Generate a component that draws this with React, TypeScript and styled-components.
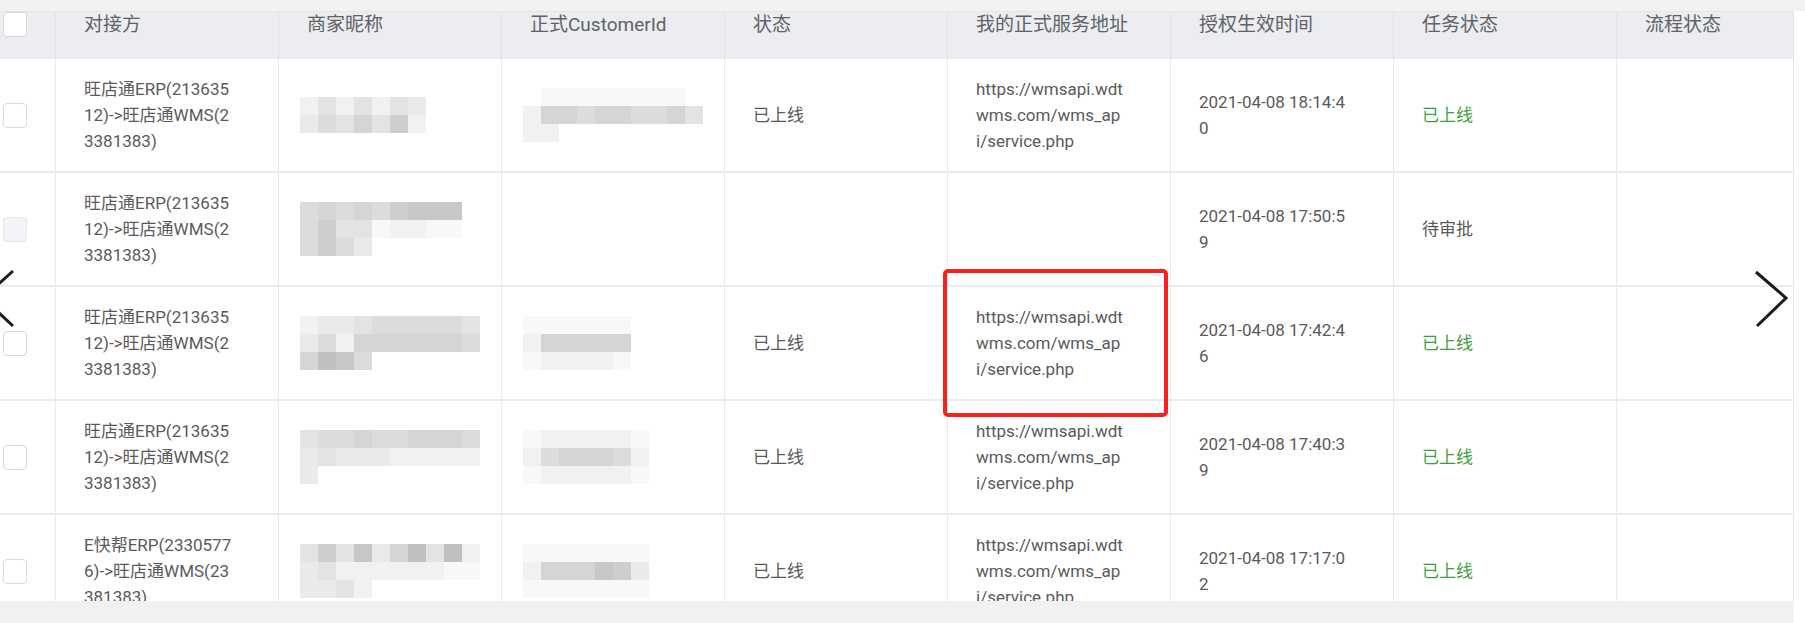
import React from 'react';
import styled, { createGlobalStyle } from 'styled-components';

const GlobalStyle = createGlobalStyle`
    html, body {
        margin: 0;
        padding: 0;
        background: #ffffff;
    }
    body {
        font-family: Roboto, "Noto Sans CJK SC", sans-serif;
    }
`;

const URL_LINES = ['https://wmsapi.wdt', 'wms.com/wms_ap', 'i/service.php'];
const WDT_LINES = ['旺店通ERP(213635', '12)->旺店通WMS(2', '3381383)'];

const headers = ['对接方', '商家昵称', '正式CustomerId', '状态', '我的正式服务地址', '授权生效时间', '任务状态', '流程状态'];

const rows: Array<iRow> = [
    {
        party: WDT_LINES,
        nick: ['24242430', '35464720'],
        customer: ['0111111110', '2665665564', '22'],
        status: '已上线',
        url: URL_LINES,
        time: ['2021-04-08 18:14:4', '0'],
        task: '已上线',
        online: true,
    },
    {
        party: WDT_LINES,
        nick: ['565657888', '574412211', '5753'],
        status: '',
        time: ['2021-04-08 17:50:5', '9'],
        task: '待审批',
        online: false,
        disabled: true,
    },
    {
        party: WDT_LINES,
        nick: ['2334555554', '3526666665', '6985'],
        customer: ['111111', '266666', '122221'],
        status: '已上线',
        url: URL_LINES,
        time: ['2021-04-08 17:42:4', '6'],
        task: '已上线',
        online: true,
    },
    {
        party: WDT_LINES,
        nick: ['4556556665', '3433322222', '3'],
        customer: ['1222221', '2566652', '1222221'],
        status: '已上线',
        url: URL_LINES,
        time: ['2021-04-08 17:40:3', '9'],
        task: '已上线',
        online: true,
    },
    {
        party: ['E快帮ERP(2330577', '6)->旺店通WMS(23', '381383)'],
        nick: ['4748369492', '3422222211', '3342'],
        customer: ['1111111', '2666873', '1111111'],
        status: '已上线',
        url: URL_LINES,
        time: ['2021-04-08 17:17:0', '2'],
        task: '已上线',
        online: true,
    },
];

const Lines = ({ lines }: { lines?: string[] }) => {
    if (!lines) {
        return null;
    }
    return <TextBlock>
        {lines.map((line, i) => <Line key={i}>{line}</Line>)}
    </TextBlock>;
};

const Mosaic = ({ rows }: { rows?: string[] }) => {
    if (!rows) {
        return null;
    }
    return <MosaicGrid>
        {rows.map((r, i) => (
            <MosaicRow key={i}>
                {r.split('').map((c, j) => <Tile key={j} $level={c} />)}
            </MosaicRow>
        ))}
    </MosaicGrid>;
};

const Chevron = ({ side }: { side: 'left' | 'right' }) => {
    const points = side === 'right' ? '6,6 36,32 7,60' : '13,5 -17,32 13,60';
    return <ArrowSvg $side={side} width={side === 'right' ? 40 : 20} height={64} viewBox={side === 'right' ? '0 0 40 64' : '0 0 20 64'}>
        <polyline points={points} fill="none" stroke="#1c1c1c" strokeWidth={3} />
    </ArrowSvg>;
};

export default function App() {
    return <>
        <GlobalStyle />
        <Page>
            <TopBand />
            <TableFrame>
                <HeaderRow>
                    <HeadCell $first>
                        <Checkbox />
                    </HeadCell>
                    {headers.map(h => <HeadCell key={h}>{h}</HeadCell>)}
                </HeaderRow>
                <Body>
                    {rows.map((row, index) => (
                        <Row key={index}>
                            <Cell $first>
                                <Checkbox $disabled={row.disabled} />
                            </Cell>
                            <Cell><Lines lines={row.party} /></Cell>
                            <Cell><Mosaic rows={row.nick} /></Cell>
                            <Cell><Mosaic rows={row.customer} /></Cell>
                            <Cell>{row.status}</Cell>
                            <Cell><Lines lines={row.url} /></Cell>
                            <Cell><Lines lines={row.time} /></Cell>
                            <Cell><TaskState $online={row.online}>{row.task}</TaskState></Cell>
                            <Cell />
                        </Row>
                    ))}
                </Body>
                <ScrollTrack />
            </TableFrame>
            <Highlight />
            <Chevron side="left" />
            <Chevron side="right" />
        </Page>
    </>;
}

const COLUMNS = '56px repeat(7, 223px) 177px';

const Page = styled.div`
    position: relative;
    width: 1805px;
    height: 623px;
    overflow: hidden;
    background: #ffffff;
    display: flex;
    flex-direction: column;
`;

const TopBand = styled.div`
    height: 11px;
    flex: none;
    background: #f2f2f3;
`;

const TableFrame = styled.div`
    width: 1794px;
    display: flex;
    flex-direction: column;
`;

const HeaderRow = styled.div`
    display: grid;
    grid-template-columns: ${COLUMNS};
    height: 48px;
    background: #ebedf0;
    border-top: 1px solid #e4e6ea;
    box-sizing: border-box;
`;

const HeadCell = styled.div<{ $first?: boolean }>`
    display: flex;
    align-items: flex-start;
    padding: 0 0 0 ${p => p.$first ? '3px' : '28px'};
    border-right: 1px solid #e0e2e7;
    font-size: 19px;
    line-height: 26px;
    color: #606266;
    white-space: nowrap;
    overflow: hidden;
`;

const Body = styled.div`
    height: 542px;
    overflow: hidden;
`;

const Row = styled.div`
    display: grid;
    grid-template-columns: ${COLUMNS};
    height: 114px;
    box-sizing: border-box;
    border-bottom: 2px solid #ebecf0;
`;

const Cell = styled.div<{ $first?: boolean }>`
    display: flex;
    align-items: center;
    padding-left: ${p => p.$first ? '3px' : '28px'};
    border-right: 1px solid #e8e9ed;
    font-size: 17px;
    line-height: 26px;
    color: #5a5a5a;
    overflow: hidden;
`;

const TextBlock = styled.div`
    display: flex;
    flex-direction: column;
`;

const Line = styled.span`
    white-space: nowrap;
`;

const TaskState = styled.span<{ $online: boolean }>`
    color: ${p => p.$online ? '#3f9f3f' : '#5a5a5a'};
`;

const Checkbox = styled.span<{ $disabled?: boolean }>`
    display: block;
    width: 24px;
    height: 25px;
    box-sizing: border-box;
    border: 1px solid ${p => p.$disabled ? '#e4e6eb' : '#d6d9df'};
    border-radius: 4px;
    background: ${p => p.$disabled ? '#f3f4f7' : '#ffffff'};
`;

const MosaicGrid = styled.div`
    display: flex;
    flex-direction: column;
    margin-left: -7px;
    filter: blur(0.6px);
`;

const MosaicRow = styled.div`
    display: flex;
`;

const Tile = styled.span<{ $level: string }>`
    width: 18px;
    height: 18px;
    background: ${p => {
        if (p.$level === ' ') {
            return 'transparent';
        }
        const v = 255 - Number(p.$level) * 7;
        return `rgb(${v}, ${v}, ${v})`;
    }};
`;

const ScrollTrack = styled.div`
    height: 22px;
    background: #f1f1f1;
`;

const Highlight = styled.div`
    position: absolute;
    left: 943px;
    top: 269px;
    width: 225px;
    height: 148px;
    box-sizing: border-box;
    border: 4px solid #f4241b;
    border-radius: 5px;
`;

const ArrowSvg = styled.svg<{ $side: 'left' | 'right' }>`
    position: absolute;
    top: 266px;
    left: ${p => p.$side === 'right' ? '1750px' : '0'};
`;

interface iRow {
    party: string[];
    nick?: string[];
    customer?: string[];
    status: string;
    url?: string[];
    time: string[];
    task: string;
    online: boolean;
    disabled?: boolean;
}
